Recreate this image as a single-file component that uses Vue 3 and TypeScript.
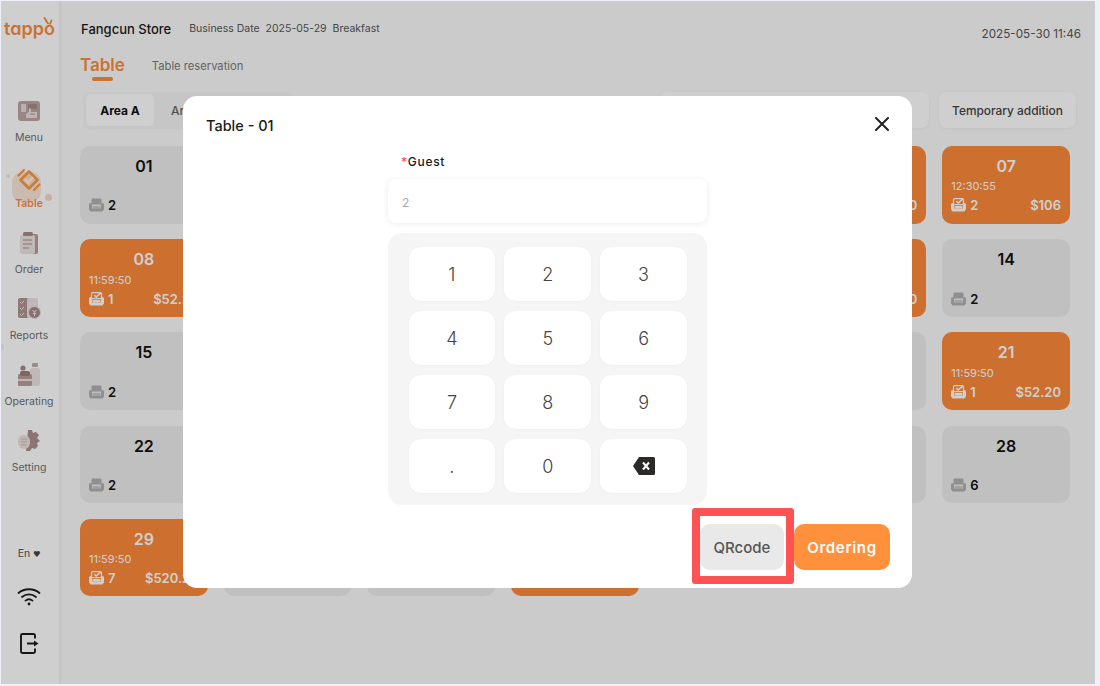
<script setup lang="ts">
interface Card {
  id: number
  no?: string
  busy: boolean
  guests?: number
  time?: string
  price?: string
}

const spec: (Omit<Card, 'id'> | null)[] = [
  { no: '01', busy: false, guests: 2 }, null, null, null, null,
  { no: '06', busy: true, guests: 2, time: '11:59:50', price: '$52.20' },
  { no: '07', busy: true, guests: 2, time: '12:30:55', price: '$106' },
  { no: '08', busy: true, guests: 1, time: '11:59:50', price: '$52.20' }, null, null, null, null,
  { no: '13', busy: true, guests: 2, time: '11:59:50', price: '$52.20' },
  { no: '14', busy: false, guests: 2 },
  { no: '15', busy: false, guests: 2 }, null, null, null, null,
  { no: '20', busy: false, guests: 2 },
  { no: '21', busy: true, guests: 1, time: '11:59:50', price: '$52.20' },
  { no: '22', busy: false, guests: 2 }, null, null, null, null,
  { no: '27', busy: false, guests: 2 },
  { no: '28', busy: false, guests: 6 },
  { no: '29', busy: true, guests: 7, time: '11:59:50', price: '$520.20' },
  null, null, { busy: true },
]

// Cards that sit wholly or mostly behind the dialog carry no visible content.
const cards: Card[] = spec.map((c, id) => ({ id, busy: false, ...(c ?? {}) }))

const keys = ['1', '2', '3', '4', '5', '6', '7', '8', '9', '.', '0']
</script>

<template>
  <div class="frame">
    <aside class="side">
      <div class="logo">
        <span class="logo-text">tappo</span>
        <svg class="logo-ears" width="10" height="9" viewBox="0 0 10 9">
          <path d="M1.500 1 L5 6.500 M8.500 3.500 L7 7" stroke="#f08a3c" stroke-width="1.800" stroke-linecap="round" fill="none" />
        </svg>
      </div>

      <div class="nav">
        <div class="nav-item">
          <div class="nav-icon">
            <svg width="22" height="20" viewBox="0 0 22 20">
              <rect width="22" height="20" rx="3" fill="#bda4a0" />
              <rect x="3" y="3" width="5" height="8" fill="#e6dad7" />
              <rect x="10" y="3" width="9" height="5" fill="#a58c88" />
              <path d="M8 17v-4l3-2V7l2 1v3h6v6z" fill="#e9dfdc" />
              <rect x="12" y="12.500" width="5" height="1.500" fill="#c3aeaa" />
            </svg>
          </div>
          <span class="nav-label">Menu</span>
        </div>

        <div class="nav-item active">
          <div class="nav-icon">
            <span class="dot dot-a"></span>
            <span class="dot dot-b"></span>
            <span class="glow"></span>
            <svg class="table-icon" width="28" height="28" viewBox="0 0 28 28">
              <path d="M14 5.500 L22.500 14 L14 22.500 L5.500 14 Z" fill="#ffdcb8" stroke="#f79a4b" stroke-width="2.600" stroke-linejoin="round" />
              <path d="M10.500 14 L13 16.500 L17.500 11.800" stroke="#fff6ea" stroke-width="2" fill="none" stroke-linecap="round" />
              <path d="M3.500 9.500 L9 4 M19 24 L24.500 18.500" stroke="#f79a4b" stroke-width="2.200" stroke-linecap="round" />
            </svg>
          </div>
          <span class="nav-label">Table</span>
        </div>

        <div class="nav-item">
          <div class="nav-icon">
            <svg width="18" height="22" viewBox="0 0 18 22">
              <rect x="3" y="2" width="15" height="20" rx="2" fill="#b89e9a" />
              <rect y="3" width="15" height="19" rx="2" fill="#ece3e1" />
              <rect x="3" width="10" height="4" rx="1.500" fill="#a58c88" />
              <path d="M3 8h9M3 12h9M3 16h6" stroke="#c2aca8" stroke-width="1.600" />
            </svg>
          </div>
          <span class="nav-label">Order</span>
        </div>

        <div class="nav-item">
          <div class="nav-icon">
            <svg width="23" height="21" viewBox="0 0 23 21">
              <rect width="11" height="20" rx="2" fill="#b1968f" />
              <rect x="9" width="11" height="20" rx="2" fill="#ece3e1" />
              <path d="M2 4l1.500 1.500L6 3M2 10l1.500 1.500L6 9M2 16l1.500 1.500L6 15" stroke="#f3eeec" stroke-width="1" fill="none" />
              <circle cx="16.500" cy="14.500" r="6" fill="#a58c88" stroke="#ece3e1" />
              <path d="M14.500 12l2 2.200 2-2.200M16.500 14.200V18M14.800 15.500h3.400" stroke="#f3eeec" stroke-width="1" fill="none" />
            </svg>
          </div>
          <span class="nav-label">Reports</span>
        </div>

        <div class="nav-item">
          <div class="nav-icon">
            <svg width="23" height="23" viewBox="0 0 23 23">
              <rect x="12" y="5" width="10" height="18" rx="3" fill="#ece3e1" />
              <rect x="14" width="6" height="4" rx="1" fill="#c2aca8" />
              <rect y="11" width="14" height="12" rx="1.500" fill="#b89e9a" />
              <circle cx="5" cy="5" r="2.600" fill="#a58c88" />
              <rect x="2" y="8" width="10" height="5" rx="2" fill="#987f7a" />
              <rect y="16" width="14" height="2" fill="#ece3e1" />
            </svg>
          </div>
          <span class="nav-label">Operating</span>
        </div>

        <div class="nav-item">
          <div class="nav-icon">
            <svg width="23" height="22" viewBox="0 0 23 22">
              <path d="M10 0h4l1 3 3-1 3 3-2 3 3 3-3 2 1 3-3 3-3-1-2 3h-4z" fill="#ab918c" />
              <rect y="5" width="12" height="14" rx="6" fill="#ece3e1" />
              <path d="M3 9h6M3 12h6M3 15h6" stroke="#cdb9b5" stroke-width="1.200" />
            </svg>
          </div>
          <span class="nav-label">Setting</span>
        </div>
      </div>

      <div class="side-foot">
        <span class="lang">En <i class="lang-caret">♥</i></span>
        <svg class="wifi" width="24" height="20" viewBox="0 0 24 20">
          <path d="M1.500 7 C7 2 17 2 22.500 7 M5 11 C9 7.500 15 7.500 19 11 M8.500 14.600 C10.500 13 13.500 13 15.500 14.600" stroke="#1c1c1c" stroke-width="1.800" fill="none" stroke-linecap="round" />
          <circle cx="12" cy="18" r="1.400" fill="#1c1c1c" />
        </svg>
        <svg class="exit" width="19" height="21" viewBox="0 0 19 21">
          <path d="M15 5.500V2.500a1.500 1.500 0 0 0-1.500-1.500H2.500A1.500 1.500 0 0 0 1 2.500v16A1.500 1.500 0 0 0 2.500 20h11a1.500 1.500 0 0 0 1.500-1.500V15.500" stroke="#1c1c1c" stroke-width="1.900" fill="none" />
          <path d="M7 10.500h8" stroke="#1c1c1c" stroke-width="2" />
          <path d="M14 7.500l4.500 3-4.500 3z" fill="#1c1c1c" />
        </svg>
      </div>
    </aside>

    <main class="main">
      <header class="top">
        <span class="store">Fangcun Store</span>
        <span class="biz">Business Date&nbsp; 2025-05-29 &nbsp;Breakfast</span>
        <span class="clock">2025-05-30 11:46</span>
      </header>

      <nav class="tabs">
        <div class="tab-main">
          <span>Table</span>
          <i class="tab-bar"></i>
        </div>
        <span class="tab-other">Table reservation</span>
      </nav>

      <div class="toolbar">
        <div class="areas">
          <span class="area on">Area A</span>
          <span class="area">Area B</span>
        </div>
        <div class="search"></div>
        <button class="temp">Temporary addition</button>
      </div>

      <section class="grid">
        <article v-for="c in cards" :key="c.id" class="card" :class="{ busy: c.busy }">
          <template v-if="c.no">
            <div class="card-no">{{ c.no }}</div>
            <div v-if="c.time" class="card-time">{{ c.time }}</div>
            <div class="card-foot">
              <svg class="sofa" width="15" height="14" viewBox="0 0 15 14">
                <rect x="2.500" y="0.600" width="10" height="6" rx="1.200" class="sofa-back" />
                <rect y="5" width="3" height="7.500" rx="1.500" class="sofa-seat" />
                <rect x="12" y="5" width="3" height="7.500" rx="1.500" class="sofa-seat" />
                <rect x="3.500" y="8" width="8" height="2.500" class="sofa-cushion" />
                <rect x="1" y="10.500" width="13" height="3" rx="0.800" class="sofa-seat" />
                <path v-if="c.busy" d="M5.200 3.200 L7.200 5 L11.800 0.800" class="sofa-tick" />
              </svg>
              <span class="card-guests">{{ c.guests }}</span>
              <span v-if="c.price" class="card-price">{{ c.price }}</span>
            </div>
          </template>
        </article>
      </section>
    </main>

    <span class="edge-dot"></span>
    <div class="overlay"></div>

    <div class="modal">
      <div class="modal-head">
        <span class="modal-title">Table - 01</span>
        <svg width="14" height="14" viewBox="0 0 14 14">
          <path d="M1 1 L13 13 M13 1 L1 13" stroke="#222" stroke-width="2" stroke-linecap="round" />
        </svg>
      </div>

      <div class="form">
        <label class="field-label"><b class="req">*</b>Guest</label>
        <div class="input">2</div>
        <div class="pad">
          <button v-for="k in keys" :key="k" class="key">{{ k }}</button>
          <button class="key">
            <svg width="22" height="18" viewBox="0 0 22 18">
              <path d="M6 0H20.500A1.500 1.500 0 0 1 22 1.500v15a1.500 1.500 0 0 1-1.500 1.500H6L0 9z" fill="#2b2a28" />
              <path d="M10 5.500l6 7M16 5.500l-6 7" stroke="#fff" stroke-width="2" />
            </svg>
          </button>
        </div>
      </div>

      <div class="modal-foot">
        <div class="qr-wrap">
          <button class="qr">QRcode</button>
          <span class="mark"></span>
        </div>
        <button class="order">Ordering</button>
      </div>
    </div>
  </div>
</template>

<style>
html,
body {
  margin: 0;
  background: #eff1f8;
}
</style>

<style scoped>
.frame {
  position: relative;
  display: flex;
  width: 1094px;
  height: 683px;
  margin: 1px 0 0 1px;
  overflow: hidden;
  background: #fbfbfb;
  font-family: Inter, "Liberation Sans", sans-serif;
  color: #111;
}

button {
  font-family: inherit;
  border: 0;
  padding: 0;
}

.side {
  position: relative;
  display: flex;
  flex-direction: column;
  flex: none;
  width: 58px;
  background: #ffffff;
  box-shadow: 1px 0 4px rgba(0, 0, 0, 0.07);
}

.logo {
  position: relative;
  height: 78px;
  padding: 15px 0 0 3px;
  box-sizing: border-box;
}

.logo-text {
  font-family: Inter, Lato, sans-serif;
  font-feature-settings: "cv11" 1;
  font-size: 18px;
  line-height: 26px;
  font-weight: 600;
  color: #fb8c3f;
}

.logo-ears {
  position: absolute;
  left: 42px;
  top: 16px;
}

.nav-item {
  display: flex;
  flex-direction: column;
  align-items: center;
  height: 66px;
  padding: 14px 2px 0 0;
  box-sizing: border-box;
}

.nav-icon {
  position: relative;
  display: flex;
  align-items: center;
  justify-content: center;
  flex: none;
  height: 35px;
}

.nav-label {
  flex: none;
  font-size: 10.5px;
  line-height: 16px;
  margin-top: 2px;
  color: #6f6f6f;
}

.active .nav-label {
  position: relative;
  color: #fb8c3f;
  font-weight: 600;
}

.active .nav-icon {
  width: 28px;
}

.table-icon {
  position: relative;
  top: 3.5px;
}

.glow {
  position: absolute;
  left: -3px;
  top: 13px;
  width: 29px;
  height: 30px;
  border-radius: 10px;
  background: #fbe6d9;
}

.dot {
  position: absolute;
  border-radius: 50%;
}

.dot-a {
  left: -9px;
  top: 15px;
  width: 4px;
  height: 4px;
  background: #fbe3d4;
}

.dot-b {
  left: 30px;
  top: 35px;
  width: 7px;
  height: 7px;
  background: #f9d9c6;
}

.side-foot {
  display: flex;
  flex-direction: column;
  align-items: center;
  margin-top: auto;
  padding-bottom: 30px;
}

.lang {
  font-size: 10.5px;
  line-height: 14px;
  color: #555;
  margin-right: 2px;
}

.lang-caret {
  font-style: normal;
  font-size: 7px;
  color: #444;
}

.wifi {
  margin-top: 24px;
  margin-right: 2px;
}

.exit {
  margin-top: 27px;
  margin-right: 1px;
}

.main {
  flex: 1;
  min-width: 0;
  padding: 0 25px 0 21px;
}

.top {
  display: flex;
  align-items: flex-start;
  padding: 20px 0 0 1px;
  margin-right: -11px;
  height: 37px;
  box-sizing: border-box;
}

.store {
  font-size: 13px;
  line-height: 16px;
  font-weight: 500;
  color: #1a1a1a;
}

.biz {
  margin-left: 18px;
  font-size: 10.5px;
  line-height: 16px;
  color: #555;
}

.clock {
  margin-left: auto;
  margin-top: 5px;
  font-size: 11.7px;
  line-height: 16px;
  color: #555;
}

.tabs {
  display: flex;
  align-items: flex-start;
  gap: 27px;
  height: 54px;
  padding-top: 15px;
  box-sizing: border-box;
}

.tab-main {
  display: flex;
  flex-direction: column;
  align-items: center;
  font-size: 17px;
  line-height: 24px;
  font-weight: 600;
  color: #fb8c3f;
}

.tab-bar {
  width: 21px;
  height: 4px;
  border-radius: 2px;
  background: #fb8c3f;
}

.tab-other {
  margin-top: 5px;
  font-size: 11.2px;
  line-height: 16px;
  color: #7a7a7a;
}

.toolbar {
  display: flex;
  align-items: stretch;
  height: 36px;
  margin: 0 -6px 0 4px;
}

.areas {
  display: flex;
  align-items: stretch;
  box-sizing: border-box;
  width: 209px;
  padding: 2px;
  border-radius: 6px;
  background: #f4f4f4;
  box-shadow: 0 1px 3px rgba(0, 0, 0, 0.05);
  overflow: hidden;
}

.area {
  display: flex;
  align-items: center;
  flex: none;
  width: 68px;
  font-size: 12px;
  font-weight: 500;
  color: #666;
  padding-left: 17px;
  box-sizing: border-box;
  justify-content: flex-start;
}

.area.on {
  justify-content: center;
  padding-left: 0;
  border-radius: 5px;
  font-weight: 700;
  color: #111;
  background: #fff;
}

.search {
  width: 269px;
  margin-left: auto;
  border-radius: 8px;
  background: #fff;
  box-shadow: 0 1px 4px rgba(0, 0, 0, 0.05);
}

.temp {
  width: 137px;
  margin-left: 10px;
  border-radius: 8px;
  background: #fff;
  font-size: 11.9px;
  font-weight: 500;
  color: #444;
  box-shadow: 0 1px 4px rgba(0, 0, 0, 0.06);
}

.grid {
  display: grid;
  grid-template-columns: repeat(7, 1fr);
  grid-auto-rows: 77.5px;
  gap: 15.7px 16px;
  margin-top: 18px;
}

.card {
  position: relative;
  display: flex;
  flex-direction: column;
  box-sizing: border-box;
  padding: 11px 9px 0;
  border-radius: 10px;
  background: #ededed;
  min-width: 0;
}

.card.busy {
  background: #fc893a;
  color: #fff;
}

.card-no {
  text-align: center;
  font-size: 16px;
  line-height: 18px;
  font-weight: 600;
}

.card-time {
  position: absolute;
  left: 9px;
  top: 33.4px;
  font-size: 11px;
  line-height: 14px;
}

.card-foot {
  position: absolute;
  left: 9px;
  right: 9px;
  top: 50.4px;
  display: flex;
  align-items: center;
  height: 18px;
}

.sofa {
  flex: none;
}

.sofa-back,
.sofa-seat {
  fill: #b0b0b0;
}

.sofa-cushion {
  fill: #c8c8c8;
}

.busy .sofa-back {
  fill: none;
  stroke: #fff;
  stroke-width: 1.2;
}

.busy .sofa-seat,
.busy .sofa-cushion {
  fill: #fff;
}

.sofa-tick {
  fill: none;
  stroke: #fff;
  stroke-width: 1.6;
}

.card-guests {
  margin-left: 4px;
  font-size: 13px;
  line-height: 18px;
  font-weight: 600;
}

.card-price {
  margin-left: auto;
  font-size: 13px;
  line-height: 18px;
  font-weight: 600;
}

.edge-dot {
  position: absolute;
  left: -3px;
  top: 343px;
  width: 6px;
  height: 6px;
  border-radius: 50%;
  background: #f0f0f4;
}

.overlay {
  position: absolute;
  inset: 0;
  background: rgba(0, 0, 0, 0.19);
}

.modal {
  position: absolute;
  left: 182px;
  top: 95px;
  display: flex;
  flex-direction: column;
  box-sizing: border-box;
  width: 729px;
  height: 492px;
  padding: 0 22px 18px 23px;
  border-radius: 14px;
  background: #fff;
}

.modal-head {
  display: flex;
  align-items: center;
  justify-content: space-between;
  flex: none;
  height: 58px;
  padding-right: 1px;
}

.modal-head svg {
  position: relative;
  top: -1px;
}

.modal-title {
  font-size: 14.5px;
  font-weight: 500;
  color: #1a1a1a;
}

.form {
  width: 319px;
  margin-left: 182px;
}

.field-label {
  display: block;
  padding-left: 13px;
  font-size: 12px;
  line-height: 16px;
  font-weight: 500;
  letter-spacing: 0.7px;
  color: #1a1a1a;
}

.req {
  font-weight: 500;
  color: #ff4d4f;
}

.input {
  display: flex;
  align-items: center;
  box-sizing: border-box;
  height: 44px;
  margin: 9px 0 10px;
  padding: 2px 0 0 14px;
  border-radius: 8px;
  font-size: 12px;
  color: #aaa;
  background: #fff;
  box-shadow: 0 1px 6px rgba(0, 0, 0, 0.08);
}

.pad {
  display: grid;
  grid-template-columns: repeat(3, 1fr);
  grid-auto-rows: 54px;
  gap: 10px 9px;
  box-sizing: border-box;
  height: 272px;
  padding: 14px 20px 12px 20.5px;
  border-radius: 14px;
  background: #f5f5f5;
}

.key {
  display: flex;
  align-items: center;
  justify-content: center;
  border-radius: 12px;
  font-size: 18px;
  font-weight: 300;
  color: #444;
  background: #fff;
  box-shadow: 0 1px 3px rgba(0, 0, 0, 0.03);
}

.modal-foot {
  display: flex;
  justify-content: flex-end;
  gap: 10px;
  height: 46px;
  margin-top: 19px;
}

.qr-wrap {
  position: relative;
  display: flex;
}

.qr {
  width: 84px;
  border-radius: 10px;
  font-size: 15px;
  font-weight: 500;
  color: #555;
  background: #e9e9e9;
}

.mark {
  position: absolute;
  top: -16px;
  right: -10px;
  bottom: -14px;
  left: -8px;
  border: 8px solid #ff5353;
  border-radius: 3px;
}

.order {
  width: 96px;
  border-radius: 10px;
  font-size: 15px;
  font-weight: 600;
  letter-spacing: 0.7px;
  color: #fff;
  background: #ff913d;
}
</style>
